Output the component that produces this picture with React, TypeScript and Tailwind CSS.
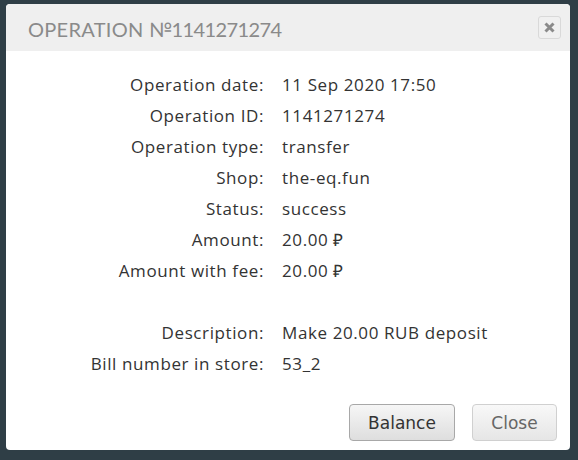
const rows: [string, string][] = [
  ["Operation date:", "11 Sep 2020 17:50"],
  ["Operation ID:", "1141271274"],
  ["Operation type:", "transfer"],
  ["Shop:", "the-eq.fun"],
  ["Status:", "success"],
  ["Amount:", "20.00 ₽"],
  ["Amount with fee:", "20.00 ₽"],
  ["", ""],
  ["Description:", "Make 20.00 RUB deposit"],
  ["Bill number in store:", "53_2"],
];

const App = () => {
  return (
    <div className="w-[578px] h-[460px] bg-[#2f3e46] pt-[4px] pl-[6px]">
      <div className="w-[564px] h-[446px] bg-white rounded-[4px] flex flex-col overflow-hidden">
        <div className="h-[47px] bg-[#efefef] flex items-center justify-between pl-[22px] pr-[9px] shrink-0">
          <h1 className="text-[20px] text-[#8a8a8a] font-['Lato',sans-serif] pt-[2px]">
            <span className="tracking-[0.3px]">OPERATION </span>
            <span className="tracking-[-0.6px]">№1141271274</span>
          </h1>
          <button className="w-[23px] h-[23px] rounded-[3px] border border-[#d9d9d9] bg-[#f0f0f0] flex items-center justify-center">
            <svg width="11" height="11" viewBox="0 0 11 11">
              <path d="M1.5 1.5 L9.5 9.5 M9.5 1.5 L1.5 9.5" stroke="#8a8a8a" strokeWidth="3" strokeLinecap="butt" />
            </svg>
          </button>
        </div>
        <div className="grid grid-cols-[258px_1fr] gap-x-[18px] pt-[18px] font-['Open_Sans',sans-serif] text-[17px] tracking-[0.6px] text-[#333]">
          {rows.map(([label, value], i) => (
            <div key={i} className="contents">
              <div className="h-[31px] leading-[31px] text-right">{label}</div>
              <div className="h-[31px] leading-[31px]">{value}</div>
            </div>
          ))}
        </div>
        <div className="flex justify-end gap-[17px] mt-auto pr-[13px] pb-[9px] font-['DejaVu_Sans',sans-serif] text-[17px]">
          <button className="w-[106px] h-[37px] rounded-[4px] border border-[#a8a8a8] bg-gradient-to-b from-[#f6f6f6] to-[#dedede] text-[#333] pt-[2px]">
            Balance
          </button>
          <button className="w-[85px] h-[37px] rounded-[4px] border border-[#d0d0d0] bg-gradient-to-b from-[#f8f8f8] to-[#e6e6e6] text-[#666] pt-[2px]">
            Close
          </button>
        </div>
      </div>
    </div>
  );
};

export default App;
